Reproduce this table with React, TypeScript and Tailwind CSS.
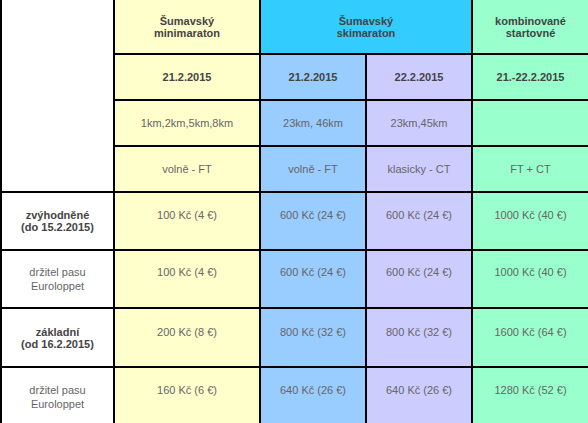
import React from "react";

type PriceRow = {
  label: [string, string];
  bold: boolean;
  prices: string[];
};

const PRICE_ROWS: PriceRow[] = [
  {
    label: ["zvýhodněné", "(do 15.2.2015)"],
    bold: true,
    prices: ["100 Kč (4 €)", "600 Kč (24 €)", "600 Kč (24 €)", "1000 Kč (40 €)"],
  },
  {
    label: ["držitel pasu", "Euroloppet"],
    bold: false,
    prices: ["100 Kč (4 €)", "600 Kč (24 €)", "600 Kč (24 €)", "1000 Kč (40 €)"],
  },
  {
    label: ["základní", "(od 16.2.2015)"],
    bold: true,
    prices: ["200 Kč (8 €)", "800 Kč (32 €)", "800 Kč (32 €)", "1600 Kč (64 €)"],
  },
  {
    label: ["držitel pasu", "Euroloppet"],
    bold: false,
    prices: ["160 Kč (6 €)", "640 Kč (26 €)", "640 Kč (26 €)", "1280 Kč (52 €)"],
  },
];

// background per price column
const COL_BG = ["bg-[#ffffcc]", "bg-[#99ccff]", "bg-[#ccccff]", "bg-[#99ffcc]"];

function Cell({ className = "", children }: { className?: string; children?: React.ReactNode }) {
  return (
    <div className={`flex flex-col items-center justify-center text-center ${className}`}>
      {children}
    </div>
  );
}

const bold = "font-bold text-[#444] leading-[12px]";
const normal = "text-[#666] leading-[14px]";

export default function App() {
  return (
    <div
      className="w-[588px] h-[423px] overflow-hidden bg-white"
      style={{ fontFamily: '"Liberation Sans", Arial, sans-serif' }}
    >
      <div className="grid w-max grid-cols-[111px_144px_104px_104px_115px] grid-rows-[53px_44px_44px_44px_56px_56px_57px_57px] gap-[2px] bg-black pl-[2px] text-[11px]">
        {/* header block */}
        <Cell className="row-span-4 bg-white" />
        <Cell className={`${COL_BG[0]} ${bold}`}>
          <span>Šumavský</span>
          <span>minimaraton</span>
        </Cell>
        <Cell className={`col-span-2 bg-[#33ccff] ${bold}`}>
          <span>Šumavský</span>
          <span>skimaraton</span>
        </Cell>
        <Cell className={`${COL_BG[3]} ${bold}`}>
          <span>kombinované</span>
          <span>startovné</span>
        </Cell>

        {/* dates */}
        <Cell className={`${COL_BG[0]} ${bold}`}>21.2.2015</Cell>
        <Cell className={`${COL_BG[1]} ${bold}`}>21.2.2015</Cell>
        <Cell className={`${COL_BG[2]} ${bold}`}>22.2.2015</Cell>
        <Cell className={`${COL_BG[3]} ${bold}`}>21.-22.2.2015</Cell>

        {/* distances */}
        <Cell className={`${COL_BG[0]} ${normal}`}>1km,2km,5km,8km</Cell>
        <Cell className={`${COL_BG[1]} ${normal}`}>23km, 46km</Cell>
        <Cell className={`${COL_BG[2]} ${normal}`}>23km,45km</Cell>
        <Cell className={`${COL_BG[3]} ${normal}`} />

        {/* technique */}
        <Cell className={`${COL_BG[0]} ${normal}`}>volně - FT</Cell>
        <Cell className={`${COL_BG[1]} ${normal}`}>volně - FT</Cell>
        <Cell className={`${COL_BG[2]} ${normal}`}>klasicky - CT</Cell>
        <Cell className={`${COL_BG[3]} ${normal}`}>FT + CT</Cell>

        {/* prices */}
        {PRICE_ROWS.map((row, i) => {
          const lh = row.bold ? "leading-[12px]" : "leading-[14px]";
          return (
            <React.Fragment key={i}>
              <Cell className={`bg-white ${row.bold ? bold : normal}`}>
                <span>{row.label[0]}</span>
                <span>{row.label[1]}</span>
              </Cell>
              {row.prices.map((p, j) => (
                <Cell key={j} className={`${COL_BG[j]} text-[#666] ${lh}`}>
                  <span>{p}</span>
                  <span>&nbsp;</span>
                </Cell>
              ))}
            </React.Fragment>
          );
        })}
      </div>
    </div>
  );
}
